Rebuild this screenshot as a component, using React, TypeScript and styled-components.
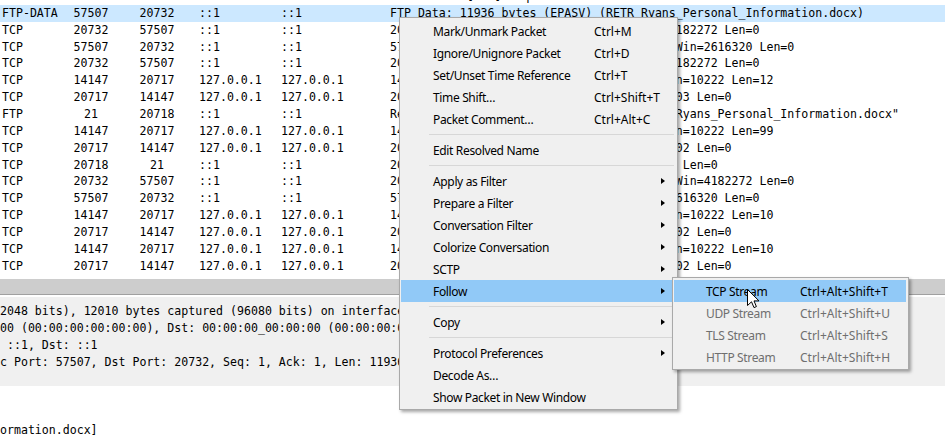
import React from 'react';
import styled, { createGlobalStyle } from 'styled-components';

const MONO = `"DejaVu Sans Mono", "Liberation Mono", monospace`;
const UI = `"Segoe UI", "Noto Sans", "Open Sans", sans-serif`;

const Global = createGlobalStyle`
  html, body { margin: 0; padding: 0; background: #fff; }
  body { width: 945px; height: 440px; overflow: hidden; }
`;

const Page = styled.div`
  position: relative;
  width: 945px;
  height: 440px;
  overflow: hidden;
  display: flex;
  flex-direction: column;
  font-family: ${MONO};
  font-size: 11.58px;
  color: #000;
  background: #fff;
`;

const PacketList = styled.div`
  flex: none;
  height: 279px;
  overflow: hidden;
  background: #fff;
`;

const PacketRows = styled.div`
  margin-top: -12px;
`;

const Row = styled.div<{ $selected?: boolean }>`
  display: grid;
  grid-template-columns: 58px 66px 66px 82px 108px 1fr;
  height: 16.87px;
  line-height: 16.87px;
  white-space: pre;
  background: ${(p) => (p.$selected ? '#cce8ff' : 'transparent')};
`;

const Cell = styled.div<{ $center?: boolean; $pad?: number }>`
  padding-left: ${(p) => p.$pad ?? 0}px;
  text-align: ${(p) => (p.$center ? 'center' : 'left')};
  overflow: hidden;
`;

const ScrollBar = styled.div`
  flex: none;
  height: 15px;
  background: #cdcdcd;
  border-bottom: 1px solid #a0a0a0;
  margin-bottom: 2px;
`;

const DetailPane = styled.div`
  flex: none;
  height: 89px;
  box-sizing: border-box;
  padding-top: 5.5px;
  background: #f0f0f0;
`;

const DetailLine = styled.div`
  height: 17px;
  line-height: 17px;
  white-space: pre;
`;

const BytesPane = styled.div`
  flex: 1;
  padding-top: 35.5px;
  background: #fff;
`;

const Menu = styled.div<{ $left: number; $top: number; $width: number }>`
  position: absolute;
  left: ${(p) => p.$left}px;
  top: ${(p) => p.$top}px;
  width: ${(p) => p.$width}px;
  box-sizing: border-box;
  background: #f0f0f0;
  border: 1px solid #a9a9a9;
  padding: 2px 1px 1px 1px;
  box-shadow: 2px 2px 3px rgba(0, 0, 0, 0.35);
  font-family: ${UI};
  font-size: 12px;
  color: #000;
`;

const SubMenu = styled(Menu)`
  padding: 2px 2px 1px 1px;
`;

const Item = styled.div<{ $active?: boolean; $disabled?: boolean; $labelWidth: number }>`
  position: relative;
  height: 22px;
  display: grid;
  grid-template-columns: ${(p) => p.$labelWidth}px auto;
  align-items: center;
  padding-left: 32px;
  white-space: pre;
  background: ${(p) => (p.$active ? '#91c9f7' : 'transparent')};
  color: ${(p) => (p.$disabled ? '#6f6f6f' : '#000')};
`;

const Label = styled.span`
  letter-spacing: -0.35px;
`;

const Shortcut = styled.span`
  letter-spacing: 0;
`;

const Arrow = styled.span`
  position: absolute;
  right: 11px;
  top: 7.5px;
  width: 0;
  height: 0;
  border-left: 4px solid #000;
  border-top: 3.5px solid transparent;
  border-bottom: 3.5px solid transparent;
`;

const Separator = styled.div`
  height: 9px;
  display: flex;
  align-items: center;
  margin: 0 2px 0 28px;
  &::after {
    content: '';
    flex: 1;
    height: 1px;
    background: #d7d7d7;
  }
`;

const Cursor = styled.svg`
  position: absolute;
  left: 746.5px;
  top: 288.5px;
  overflow: visible;
`;

type Pkt = [string, string, string, string, string, string];

const V6 = '::1';
const V4 = '127.0.0.1';

const packets: Pkt[] = [
  ['TCP', '20718', '21', V6, V6, '20718 → 21 [ACK] Seq=160 Ack=1240 Win=2619648 Len=0'],
  ['FTP-DATA', '57507', '20732', V6, V6, 'FTP Data: 11936 bytes (EPASV) (RETR Ryans_Personal_Information.docx)'],
  ['TCP', '20732', '57507', V6, V6, '20732 → 57507 [ACK] Seq=1 Ack=11937 Win=4182272 Len=0'],
  ['TCP', '57507', '20732', V6, V6, '57507 → 20732 [FIN, ACK] Seq=11937 Ack=1 Win=2616320 Len=0'],
  ['TCP', '20732', '57507', V6, V6, '20732 → 57507 [ACK] Seq=1 Ack=11938 Win=4182272 Len=0'],
  ['TCP', '14147', '20717', V4, V4, '14147 → 20717 [PSH, ACK] Seq=99 Ack=32 Win=10222 Len=12'],
  ['TCP', '20717', '14147', V4, V4, '20717 → 14147 [ACK] Seq=1 Ack=12 Win=261903 Len=0'],
  ['FTP', '21', '20718', V6, V6, 'Response: 226 Successfully transferred "/Ryans_Personal_Information.docx"'],
  ['TCP', '14147', '20717', V4, V4, '14147 → 20717 [PSH, ACK] Seq=99 Ack=34 Win=10222 Len=99'],
  ['TCP', '20717', '14147', V4, V4, '20717 → 14147 [ACK] Seq=1 Ack=13 Win=261902 Len=0'],
  ['TCP', '20718', '21', V6, V6, '20718 → 21 [ACK] Seq=55 Ack=240 Win=26192 Len=0'],
  ['TCP', '20732', '57507', V6, V6, '20732 → 57507 [FIN, ACK] Seq=1 Ack=11938 Win=4182272 Len=0'],
  ['TCP', '57507', '20732', V6, V6, '57507 → 20732 [ACK] Seq=11938 Ack=2 Win=2616320 Len=0'],
  ['TCP', '14147', '20717', V4, V4, '14147 → 20717 [PSH, ACK] Seq=99 Ack=35 Win=10222 Len=10'],
  ['TCP', '20717', '14147', V4, V4, '20717 → 14147 [ACK] Seq=1 Ack=22 Win=261902 Len=0'],
  ['TCP', '14147', '20717', V4, V4, '14147 → 20717 [PSH, ACK] Seq=99 Ack=36 Win=10222 Len=10'],
  ['TCP', '20717', '14147', V4, V4, '20717 → 14147 [ACK] Seq=1 Ack=32 Win=261902 Len=0'],
];

const details = [
  '2048 bits), 12010 bytes captured (96080 bits) on interface \\Device\\NPF_Loopback, id 0',
  '00 (00:00:00:00:00:00), Dst: 00:00:00_00:00:00 (00:00:00:00:00:00)',
  ' ::1, Dst: ::1',
  'c Port: 57507, Dst Port: 20732, Seq: 1, Ack: 1, Len: 11936',
];

type MenuEntry =
  | { sep: true }
  | { sep?: false; label: string; shortcut?: string; sub?: boolean; active?: boolean };

const menu: MenuEntry[] = [
  { label: 'Mark/Unmark Packet', shortcut: 'Ctrl+M' },
  { label: 'Ignore/Unignore Packet', shortcut: 'Ctrl+D' },
  { label: 'Set/Unset Time Reference', shortcut: 'Ctrl+T' },
  { label: 'Time Shift…', shortcut: 'Ctrl+Shift+T' },
  { label: 'Packet Comment…', shortcut: 'Ctrl+Alt+C' },
  { sep: true },
  { label: 'Edit Resolved Name' },
  { sep: true },
  { label: 'Apply as Filter', sub: true },
  { label: 'Prepare a Filter', sub: true },
  { label: 'Conversation Filter', sub: true },
  { label: 'Colorize Conversation', sub: true },
  { label: 'SCTP', sub: true },
  { label: 'Follow', sub: true, active: true },
  { sep: true },
  { label: 'Copy', sub: true },
  { sep: true },
  { label: 'Protocol Preferences', sub: true },
  { label: 'Decode As…' },
  { label: 'Show Packet in New Window' },
];

const follow = [
  { label: 'TCP Stream', shortcut: 'Ctrl+Alt+Shift+T', active: true },
  { label: 'UDP Stream', shortcut: 'Ctrl+Alt+Shift+U', disabled: true },
  { label: 'TLS Stream', shortcut: 'Ctrl+Alt+Shift+S', disabled: true },
  { label: 'HTTP Stream', shortcut: 'Ctrl+Alt+Shift+H', disabled: true },
];

export default function App() {
  return (
    <>
      <Global />
      <Page>
        <PacketList>
          <PacketRows>
            {packets.map((p, i) => (
              <Row key={i} $selected={i === 1}>
                <Cell $pad={2}>{p[0]}</Cell>
                <Cell $center>{p[1]}</Cell>
                <Cell $center>{p[2]}</Cell>
                <Cell $pad={9}>{p[3]}</Cell>
                <Cell $pad={9}>{p[4]}</Cell>
                <Cell $pad={10}>{p[5]}</Cell>
              </Row>
            ))}
          </PacketRows>
        </PacketList>
        <ScrollBar />
        <DetailPane>
          {details.map((d, i) => (
            <DetailLine key={i}>{d}</DetailLine>
          ))}
        </DetailPane>
        <BytesPane>
          <DetailLine>ormation.docx]</DetailLine>
        </BytesPane>

        <Menu $left={399} $top={17} $width={279}>
          {menu.map((m, i) =>
            m.sep ? (
              <Separator key={i} />
            ) : (
              <Item key={i} $labelWidth={161} $active={m.active}>
                <Label>{m.label}</Label>
                <Shortcut>{m.shortcut ?? ''}</Shortcut>
                {m.sub && <Arrow />}
              </Item>
            )
          )}
        </Menu>

        <SubMenu $left={672} $top={277} $width={237}>
          {follow.map((f, i) => (
            <Item key={i} $labelWidth={94} $active={f.active} $disabled={f.disabled}>
              <Label>{f.label}</Label>
              <Shortcut>{f.shortcut}</Shortcut>
            </Item>
          ))}
        </SubMenu>

        <Cursor width="13" height="20" viewBox="0 0 13 20">
          <path
            d="M0.5 0.5 L0.5 16.5 L4.5 12.8 L7 18.6 L9.4 17.6 L7 11.9 L12 11.9 Z"
            fill="#fff"
            stroke="#000"
            strokeWidth="1"
            strokeLinejoin="miter"
          />
        </Cursor>
      </Page>
    </>
  );
}
